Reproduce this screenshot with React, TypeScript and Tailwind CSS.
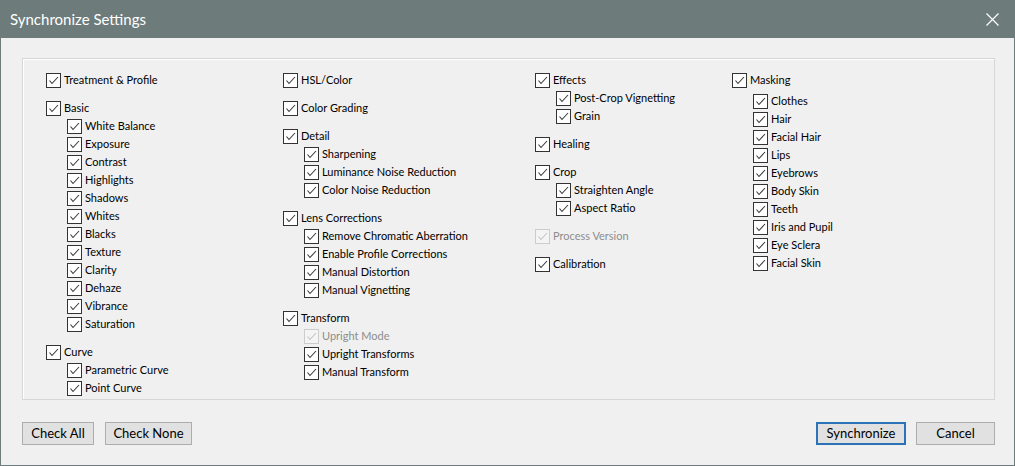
import React from "react";

type Item = { label: string; disabled?: boolean; children?: Item[]; childOffset?: boolean };

const columns: { width: string; groups: Item[] }[] = [
  {
    width: "w-[237px]",
    groups: [
      { label: "Treatment & Profile" },
      {
        label: "Basic",
        children: [
          "White Balance",
          "Exposure",
          "Contrast",
          "Highlights",
          "Shadows",
          "Whites",
          "Blacks",
          "Texture",
          "Clarity",
          "Dehaze",
          "Vibrance",
          "Saturation",
        ].map((label) => ({ label })),
      },
      { label: "Curve", children: [{ label: "Parametric Curve" }, { label: "Point Curve" }] },
    ],
  },
  {
    width: "w-[252px]",
    groups: [
      { label: "HSL/Color" },
      { label: "Color Grading" },
      {
        label: "Detail",
        children: [{ label: "Sharpening" }, { label: "Luminance Noise Reduction" }, { label: "Color Noise Reduction" }],
      },
      {
        label: "Lens Corrections",
        children: [
          { label: "Remove Chromatic Aberration" },
          { label: "Enable Profile Corrections" },
          { label: "Manual Distortion" },
          { label: "Manual Vignetting" },
        ],
      },
      {
        label: "Transform",
        children: [{ label: "Upright Mode", disabled: true }, { label: "Upright Transforms" }, { label: "Manual Transform" }],
      },
    ],
  },
  {
    width: "w-[197px]",
    groups: [
      { label: "Effects", children: [{ label: "Post-Crop Vignetting" }, { label: "Grain" }] },
      { label: "Healing" },
      { label: "Crop", children: [{ label: "Straighten Angle" }, { label: "Aspect Ratio" }] },
      { label: "Process Version", disabled: true },
      { label: "Calibration" },
    ],
  },
  {
    width: "w-[200px]",
    groups: [
      {
        label: "Masking",
        childOffset: true,
        children: [
          "Clothes",
          "Hair",
          "Facial Hair",
          "Lips",
          "Eyebrows",
          "Body Skin",
          "Teeth",
          "Iris and Pupil",
          "Eye Sclera",
          "Facial Skin",
        ].map((label) => ({ label })),
      },
    ],
  },
];

function Check({ label, disabled }: { label: string; disabled?: boolean }) {
  return (
    <div className="flex h-[18px] items-center gap-[3px]">
      <span
        className={
          disabled
            ? "flex h-[15px] w-[15px] shrink-0 items-center justify-center border border-[#cccccc] bg-[#f4f4f4]"
            : "flex h-[15px] w-[15px] shrink-0 items-center justify-center border border-[#333333] bg-white"
        }
      >
        <svg width="13" height="13" viewBox="0 0 13 13">
          <polyline
            points="2.5,6.5 5,9.5 11,3"
            fill="none"
            stroke={disabled ? "#c4c4c4" : "#3a3a3a"}
            strokeWidth="1.1"
          />
        </svg>
      </span>
      <span className={disabled ? "text-[#8d8d8d]" : "text-black"}>{label}</span>
    </div>
  );
}

function Group({ item }: { item: Item }) {
  return (
    <div className="mb-[10px]">
      <Check label={item.label} disabled={item.disabled} />
      {item.children && (
        <div className={item.childOffset ? "mt-[3px] pl-[21px]" : "pl-[21px]"}>
          {item.children.map((c) => (
            <Check key={c.label} label={c.label} disabled={c.disabled} />
          ))}
        </div>
      )}
    </div>
  );
}

function Button({ children, primary, width }: { children: React.ReactNode; primary?: boolean; width: string }) {
  return (
    <button
      className={
        (primary
          ? "border-2 border-[#2b73b6] "
          : "border border-[#adadad] ") +
        width +
        " h-[23px] bg-[#e1e1e1] text-[13px] leading-none text-black"
      }
    >
      {children}
    </button>
  );
}

export default function App() {
  return (
    <div
      className="flex h-[466px] w-[1015px] flex-col border-x border-b border-[#6d7b7b] bg-[#f0f0f0] text-[11px]"
      style={{ fontFamily: 'Lato, "Noto Sans", sans-serif' }}
    >
      <div className="flex h-[38px] shrink-0 items-center justify-between bg-[#6d7b7b] pl-[9px] pr-[15px] text-white">
        <span className="text-[15px]">Synchronize Settings</span>
        <svg width="13" height="13" viewBox="0 0 13 13">
          <path d="M0.5 0.5 L12.5 12.5 M12.5 0.5 L0.5 12.5" stroke="white" strokeWidth="1.2" />
        </svg>
      </div>
      <div className="flex flex-1 flex-col pl-[21px] pr-[19px] pt-[20px]">
        <div className="flex h-[342px] border border-[#d6d6d6] bg-[#f0f0f0] pl-[23px] pt-[12px] shadow-[inset_1px_1px_0_#ffffff]">
          {columns.map((col, i) => (
            <div key={i} className={col.width}>
              {col.groups.map((g) => (
                <Group key={g.label} item={g} />
              ))}
            </div>
          ))}
        </div>
        <div className="mt-[22px] flex items-center">
          <Button width="w-[72px]">Check All</Button>
          <Button width="w-[87px] ml-[11px]">Check None</Button>
          <div className="flex-1" />
          <Button primary width="w-[90px]">Synchronize</Button>
          <Button width="w-[79px] ml-[10px]">Cancel</Button>
        </div>
      </div>
    </div>
  );
}
